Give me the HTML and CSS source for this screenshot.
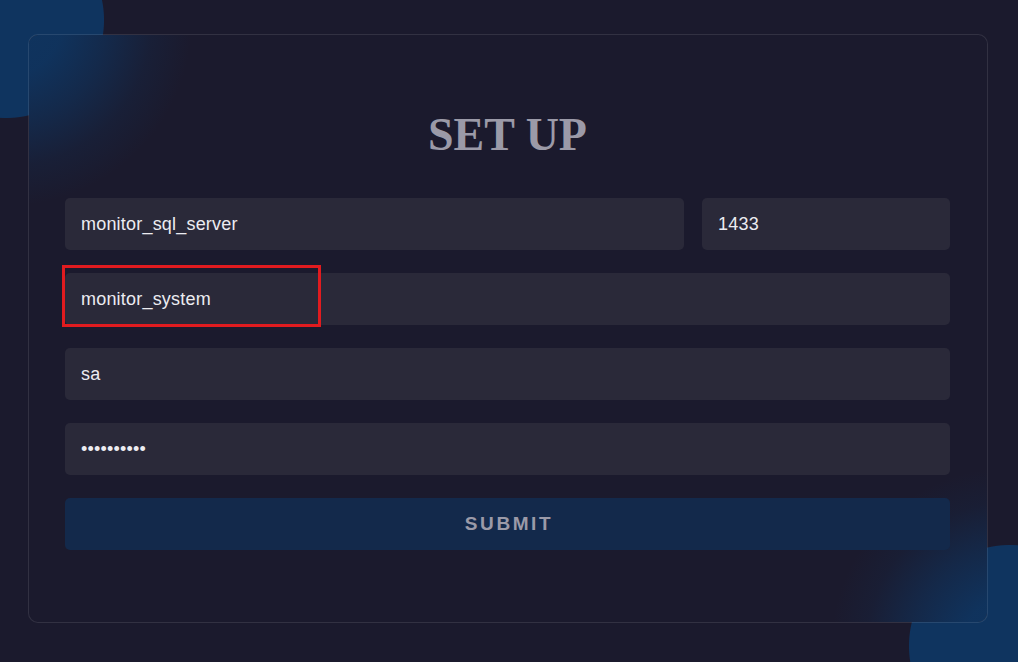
FILE: index.html
```html
<!DOCTYPE html>
<html>
<head>
<meta charset="utf-8">
<link rel="stylesheet" href="styles.css">
</head>
<body>
<form class="card">
  <h1 class="title">SET UP</h1>
  <div class="row row-split">
    <input class="field" type="text" value="monitor_sql_server">
    <input class="field" type="text" value="1433">
  </div>
  <div class="row highlight-wrap">
    <input class="field" type="text" value="monitor_system">
    <div class="highlight"></div>
  </div>
  <div class="row">
    <input class="field" type="text" value="sa">
  </div>
  <div class="row">
    <input class="field" type="password" value="password12">
  </div>
  <div class="row">
    <button class="submit" type="button">SUBMIT</button>
  </div>
</form>
</body>
</html>
```

FILE: styles.css
```css
html {
  margin: 0;
  padding: 0;
  overflow: hidden;
}
body {
  margin: 0;
  background:
    radial-gradient(circle at 6px 20px, #0f345f 97.5px, rgba(15, 52, 95, 0) 98.5px),
    radial-gradient(circle at 1010px 646px, #0f345f 100.5px, rgba(15, 52, 95, 0) 101.5px),
    #1b1a2d;
  background-repeat: no-repeat;
  width: 1018px;
  height: 662px;
  overflow: hidden;
  display: flex;
  justify-content: flex-start;
  align-items: flex-start;
  padding: 34px 0 0 28px;
  box-sizing: border-box;
  font-family: "Liberation Sans", Arial, sans-serif;
}
.card {
  position: relative;
  width: 960px;
  box-sizing: border-box;
  padding: 77px 37px 72px 36px;
  border: 1px solid rgba(255, 255, 255, 0.1);
  border-radius: 10px;
  background:
    radial-gradient(circle at -22px -14px, rgba(15, 52, 95, 1) 0px, rgba(15, 52, 95, 0.95) 55px, rgba(15, 52, 95, 0.6) 100px, rgba(15, 52, 95, 0.2) 145px, rgba(15, 52, 95, 0) 185px),
    radial-gradient(circle at 982px 612px, rgba(15, 52, 95, 1) 0px, rgba(15, 52, 95, 0.95) 50px, rgba(15, 52, 95, 0.55) 100px, rgba(15, 52, 95, 0.15) 145px, rgba(15, 52, 95, 0) 180px),
    #1b1a2d;
  background-clip: padding-box;
  display: flex;
  flex-direction: column;
  gap: 23px;
}
.title {
  margin: 0 0 17px;
  font-family: "Liberation Serif", "Times New Roman", serif;
  font-weight: bold;
  font-size: 46px;
  line-height: 46px;
  text-align: center;
  color: #9b9aa8;
}
.row {
  display: flex;
}
.row-split {
  display: grid;
  grid-template-columns: 1fr 248px;
  gap: 18px;
}
.field {
  width: 100%;
  height: 52px;
  box-sizing: border-box;
  border: none;
  outline: none;
  border-radius: 5px;
  background: #2a2939;
  color: #ececf1;
  padding: 0 16px;
  font-family: "Liberation Sans", Arial, sans-serif;
  font-size: 18px;
  letter-spacing: 0.2px;
}
.highlight-wrap {
  position: relative;
}
.highlight {
  position: absolute;
  left: -3px;
  top: -8px;
  width: 253px;
  height: 56px;
  border: 3px solid #e11b1f;
}
.submit {
  width: 100%;
  height: 52px;
  border: none;
  border-radius: 5px;
  background: #13294b;
  color: #9b9aa8;
  font-family: "Liberation Sans", Arial, sans-serif;
  font-weight: bold;
  font-size: 19px;
  letter-spacing: 2.6px;
  padding: 0 0 0 3px;
}
```
